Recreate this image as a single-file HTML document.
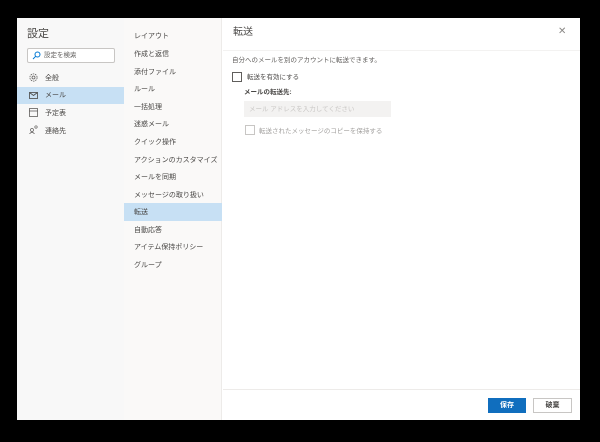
<!DOCTYPE html>
<html><head><meta charset="utf-8"><style>
*{margin:0;padding:0;box-sizing:border-box}
body{width:600px;height:442px;background:#000;position:relative;overflow:hidden;font-family:"Liberation Sans","Noto Sans CJK JP",sans-serif;color:#484644}
.dlg{position:absolute;left:17px;top:18px;width:563px;height:402px;background:#fff}
.left{position:absolute;left:0;top:0;width:107px;height:402px;background:#f8f8f8}
.mid{position:absolute;left:107px;top:0;width:98px;height:402px;background:#faf9f8;border-right:1px solid #edebe9}
.t{position:absolute;font-size:7px;white-space:nowrap;line-height:9px}
.hl{position:absolute;background:#c7e0f4}
</style></head><body>
<div class="dlg">
<div class="left">
<div class="t" style="left:10px;top:10px;font-size:11px;line-height:13px">設定</div>
<div style="position:absolute;left:10px;top:30px;width:88px;height:15px;border:1px solid #c8c6c4;background:#fff;border-radius:2px"></div>
<svg style="position:absolute;left:15px;top:33px" width="9" height="9"><circle cx="5.5" cy="3.5" r="2.5" fill="none" stroke="#0078d4" stroke-width="1"/><line x1="3.7" y1="5.3" x2="1" y2="8" stroke="#0078d4"/></svg>
<div class="t" style="left:27px;top:33px;color:#605e5c;font-size:6.5px">設定を検索</div>
<div class="hl" style="left:0;top:69px;width:107px;height:17px"></div>
<svg style="position:absolute;left:12px;top:55px" width="9" height="9"><circle cx="4.5" cy="4.5" r="3.6" fill="none" stroke="#605e5c" stroke-width=".8" stroke-dasharray="1.5 .8"/><circle cx="4.5" cy="4.5" r="1.5" fill="none" stroke="#605e5c" stroke-width=".8"/></svg>
<div class="t" style="left:28px;top:56px">全般</div>
<svg style="position:absolute;left:12px;top:74px" width="9" height="7"><rect x=".5" y=".5" width="8" height="6" fill="none" stroke="#484644" stroke-width=".8"/><path d="M.5 .5L4.5 3.5L8.5 .5" fill="none" stroke="#484644" stroke-width=".8"/></svg>
<div class="t" style="left:28px;top:73px">メール</div>
<svg style="position:absolute;left:12px;top:90px" width="9" height="9"><rect x=".5" y=".5" width="8" height="8" fill="none" stroke="#605e5c" stroke-width=".8"/><line x1="0" y1="3" x2="9" y2="3" stroke="#605e5c" stroke-width=".8"/></svg>
<div class="t" style="left:28px;top:91px">予定表</div>
<svg style="position:absolute;left:12px;top:107px" width="9" height="9"><circle cx="3" cy="5" r="1.5" fill="none" stroke="#605e5c" stroke-width=".7"/><path d="M0.5 9Q3 5.5 5.5 9" fill="none" stroke="#605e5c" stroke-width=".7"/><circle cx="7" cy="2" r="1.2" fill="none" stroke="#605e5c" stroke-width=".7"/></svg>
<div class="t" style="left:28px;top:109px">連絡先</div>
</div>
<div class="mid">
<div class="hl" style="left:0;top:185px;width:98px;height:18px"></div>
<div class="t" style="left:10px;top:14px">レイアウト</div>
<div class="t" style="left:10px;top:32px">作成と返信</div>
<div class="t" style="left:10px;top:50px">添付ファイル</div>
<div class="t" style="left:10px;top:67px">ルール</div>
<div class="t" style="left:10px;top:85px">一括処理</div>
<div class="t" style="left:10px;top:102px">迷惑メール</div>
<div class="t" style="left:10px;top:120px">クイック操作</div>
<div class="t" style="left:10px;top:138px">アクションのカスタマイズ</div>
<div class="t" style="left:10px;top:155px">メールを同期</div>
<div class="t" style="left:10px;top:173px">メッセージの取り扱い</div>
<div class="t" style="left:10px;top:190px">転送</div>
<div class="t" style="left:10px;top:208px">自動応答</div>
<div class="t" style="left:10px;top:225px">アイテム保持ポリシー</div>
<div class="t" style="left:10px;top:243px">グループ</div>
</div>
<div class="t" style="left:216px;top:9px;font-size:10px;line-height:12px">転送</div>
<div class="t" style="left:541px;top:9px;font-size:10px;color:#8a8886">✕</div>
<div style="position:absolute;left:206px;top:32px;width:357px;height:1px;background:#f3f2f1"></div>
<div class="t" style="left:215px;top:38px;color:#605e5c;font-size:6.5px">自分へのメールを別のアカウントに転送できます。</div>
<div style="position:absolute;left:215px;top:54px;width:10px;height:10px;border:1px solid #605e5c"></div>
<div class="t" style="left:230px;top:55px;font-size:6.5px">転送を有効にする</div>
<div class="t" style="left:227px;top:70px;font-size:6.5px;font-weight:bold">メールの転送先:</div>
<div style="position:absolute;left:227px;top:83px;width:147px;height:16px;background:#f3f2f1"></div>
<div class="t" style="left:232px;top:87px;color:#c8c6c4;font-size:6.5px">メール アドレスを入力してください</div>
<div style="position:absolute;left:228px;top:107px;width:10px;height:10px;border:1px solid #c8c6c4"></div>
<div class="t" style="left:242px;top:109px;color:#a19f9d;font-size:6.5px">転送されたメッセージのコピーを保持する</div>
<div style="position:absolute;left:206px;top:371px;width:357px;height:1px;background:#edebe9"></div>
<div style="position:absolute;left:471px;top:380px;width:38px;height:15px;background:#106ebe;color:#fff;font-size:7px;line-height:15px;text-align:center;font-weight:bold">保存</div>
<div style="position:absolute;left:516px;top:380px;width:39px;height:15px;border:1px solid #c8c6c4;font-size:7px;line-height:13px;text-align:center;font-weight:bold">破棄</div>
</div>
</body></html>
